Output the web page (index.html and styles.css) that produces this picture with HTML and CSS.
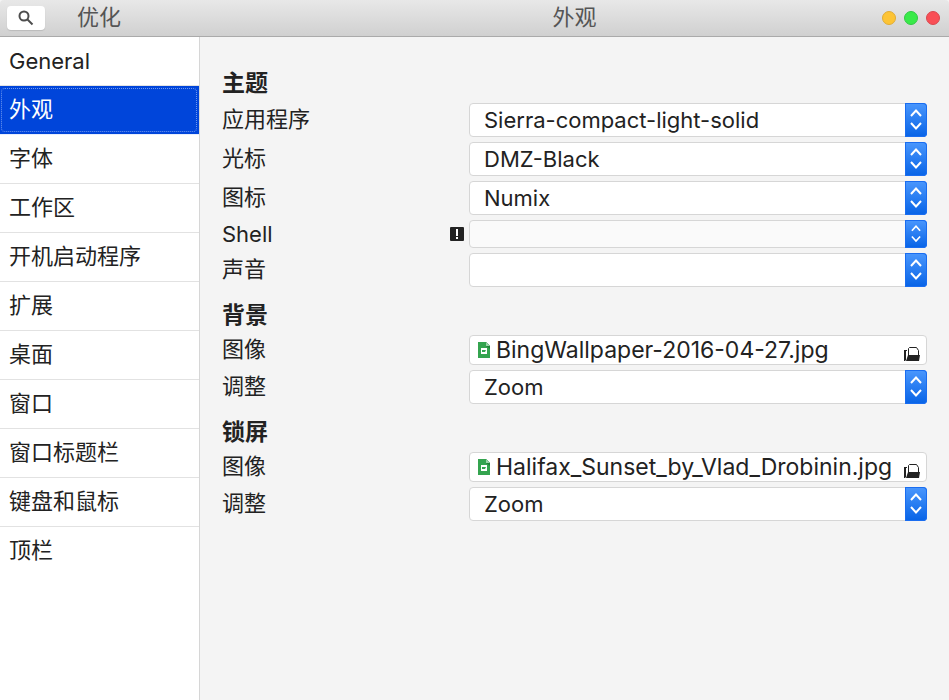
FILE: index.html
```
<!DOCTYPE html>
<html lang="zh-CN">
<head>
<meta charset="utf-8">
<meta name="viewport" content="width=device-width, initial-scale=1">
<title>优化</title>
<link rel="stylesheet" href="styles.css">
</head>
<body>
<svg class="sprites" aria-hidden="true">
  <symbol id="updown" viewBox="0 0 22 34"><path d="M6 13 11 7.500l5 5.500M6 20 11 25.500l5-5.500" fill="none" stroke="#fff" stroke-width="2"/></symbol>
  <symbol id="image-file" viewBox="0 0 12 16"><path d="M0 0h8l4 4v12H0z" fill="#34a44f"/><path d="M8 0l4 4v3L8 4z" fill="#23803a"/><path d="M8 0l4 4H8z" fill="#9bd3a8"/><path d="M3 6h6v6H3z" fill="#fff"/><path d="M4 8h4l-1 2H4z" fill="#34a44f"/></symbol>
  <symbol id="folder-open" viewBox="0 0 16 14"><path d="M0 3h3v1H2v9l-1 1H0z" fill="#222"/><path d="M4.500 8V1.500l1-1h7l2 3V8" fill="none" stroke="#222"/><path d="M4 8h12l-1 6H2z" fill="#222"/></symbol>
</svg>
<header class="titlebar">
  <div class="titlebar-side">
    <button class="search" type="button" aria-label="搜索"><svg viewBox="0 0 16 16" width="16" height="16"><circle cx="6" cy="6" r="4.500"/><path d="M9.500 9.500l5 5"/></svg></button>
    <h1>优化</h1>
  </div>
  <div class="titlebar-main">
    <h2>外观</h2>
    <div class="window-buttons">
      <button class="dot minimize" type="button" aria-label="最小化"></button>
      <button class="dot maximize" type="button" aria-label="最大化"></button>
      <button class="dot close" type="button" aria-label="关闭"></button>
    </div>
  </div>
</header>
<div class="content">
  <nav class="sidebar">
    <a href="#" class="latin">General</a>
    <a href="#" class="selected" aria-current="page">外观</a>
    <a href="#">字体</a>
    <a href="#">工作区</a>
    <a href="#">开机启动程序</a>
    <a href="#">扩展</a>
    <a href="#">桌面</a>
    <a href="#">窗口</a>
    <a href="#">窗口标题栏</a>
    <a href="#">键盘和鼠标</a>
    <a href="#">顶栏</a>
  </nav>
  <main class="panel">
    <h3>主题</h3>
    <div class="row"><label for="app">应用程序</label><div class="combo"><select id="app"><option>Sierra-compact-light-solid</option></select><svg class="stepper"><use href="#updown"/></svg></div></div>
    <div class="row"><label for="cursor">光标</label><div class="combo"><select id="cursor"><option>DMZ-Black</option></select><svg class="stepper"><use href="#updown"/></svg></div></div>
    <div class="row"><label for="icons">图标</label><div class="combo"><select id="icons"><option>Numix</option></select><svg class="stepper"><use href="#updown"/></svg></div></div>
    <div class="row"><label for="shell" class="latin">Shell<svg viewBox="0 0 14 14" width="14" height="14"><rect width="14" height="14" rx="1" fill="#222"/><path d="M6 2h2v7H6zM6 10h2v2H6z" fill="#fff"/></svg></label><div class="combo short"><select id="shell" disabled><option></option></select><svg class="stepper"><use href="#updown"/></svg></div></div>
    <div class="row"><label for="sound">声音</label><div class="combo"><select id="sound"><option></option></select><svg class="stepper"><use href="#updown"/></svg></div></div>
    <h3>背景</h3>
    <div class="row"><label for="bg">图像</label><button id="bg" class="file" type="button"><svg width="12" height="16"><use href="#image-file"/></svg><span>BingWallpaper-2016-04-27.jpg</span><svg class="folder" width="16" height="14"><use href="#folder-open"/></svg></button></div>
    <div class="row"><label for="bg-mode">调整</label><div class="combo"><select id="bg-mode"><option>Zoom</option></select><svg class="stepper"><use href="#updown"/></svg></div></div>
    <h3>锁屏</h3>
    <div class="row"><label for="lock">图像</label><button id="lock" class="file" type="button"><svg width="12" height="16"><use href="#image-file"/></svg><span>Halifax_Sunset_by_Vlad_Drobinin.jpg</span><svg class="folder" width="16" height="14"><use href="#folder-open"/></svg></button></div>
    <div class="row"><label for="lock-mode">调整</label><div class="combo"><select id="lock-mode"><option>Zoom</option></select><svg class="stepper"><use href="#updown"/></svg></div></div>
  </main>
</div>
</body>
</html>
```
FILE: styles.css
```
* { box-sizing: border-box; }
body {
  margin: 0;
  min-height: 100vh;
  display: flex;
  flex-direction: column;
  background: #f4f4f4;
  color: #222;
  font: 22px/30px Inter, "Noto Sans CJK SC", sans-serif;
}
h1, h2, h3 { margin: 0; font-size: 22px; line-height: 30px; }
button, select { font: inherit; color: inherit; }
.sprites { display: none; }

.titlebar {
  display: flex;
  height: 37px;
  background: linear-gradient(#e8e8e8, #d0d0d0);
  border-bottom: 1px solid #aaa;
  border-radius: 4px 4px 0 0;
  color: #555;
}
.titlebar h1, .titlebar h2 { font-weight: 400; padding-bottom: 2px; }
.titlebar-side {
  width: 200px;
  display: flex;
  align-items: center;
  gap: 32px;
  padding-left: 7px;
}
.search {
  display: flex;
  align-items: center;
  justify-content: center;
  width: 38px;
  height: 24px;
  padding: 0;
  border: 0;
  border-radius: 4px;
  background: #fff;
  box-shadow: 0 1px 1px #bbb;
}
.search svg { fill: none; stroke: #4d4d4d; stroke-width: 2; }
.titlebar-main {
  flex: 1;
  display: grid;
  grid-template-columns: 1fr auto 1fr;
  align-items: center;
}
.titlebar-main h2 { grid-column: 2; }
.window-buttons {
  display: flex;
  justify-content: flex-end;
  gap: 8px;
  padding-right: 9px;
}
.dot { width: 14px; height: 14px; padding: 0; border: 1px solid; border-radius: 50%; }
.minimize { background: #fdc435; border-color: #e0ac35; }
.maximize { background: #39ea49; border-color: #33c845; }
.close { background: #f94f56; border-color: #d9484f; }

.content { flex: 1; display: flex; }
.sidebar { width: 200px; background: #fff; border-right: 1px solid #d6d6d6; }
.sidebar a {
  position: relative;
  display: flex;
  align-items: center;
  height: 49px;
  padding: 0 0 2px 9px;
  border-bottom: 1px solid #e2e2e2;
  color: inherit;
  text-decoration: none;
}
.sidebar a:last-child { border-color: transparent; }
.sidebar .selected {
  background: #0045da;
  border-color: #e8eefb;
  color: #fff;
}
.sidebar .selected::after {
  content: "";
  position: absolute;
  inset: 2px 2px 2px 1px;
  border: 1px dotted #6f98ee;
  border-radius: 4px;
}

.panel {
  flex: 1;
  min-width: 0;
  display: flex;
  flex-direction: column;
  gap: 5px;
  padding: 23px 22px;
}
.panel h3 { margin-top: 8px; font-size: 23px; font-weight: 700; }
.row { display: grid; grid-template-columns: 247px minmax(0, 1fr); align-items: center; }
.row label {
  display: flex;
  align-items: center;
  justify-content: space-between;
  height: 28px;
  padding: 0 5px 2px 0;
}
.sidebar .latin, .row .latin { padding-bottom: 0; }
.combo { position: relative; height: 34px; }
.combo.short { height: 28px; }
.combo select {
  display: block;
  appearance: none;
  width: 100%;
  height: 100%;
  padding: 0 30px 0 14px;
  border: 1px solid #d6d6d6;
  border-radius: 4px;
  background: #fff;
}
.combo select:disabled { background: #fafafa; opacity: 1; }
.stepper {
  position: absolute;
  top: 0;
  right: 0;
  width: 22px;
  height: 100%;
  border-radius: 0 4px 4px 0;
  background: linear-gradient(#4a97fd, #0763e6);
  box-shadow: inset 0 0 0 1px #1a6df0;
  pointer-events: none;
}
.file {
  display: flex;
  align-items: center;
  gap: 6px;
  width: 100%;
  height: 30px;
  padding: 0 6px 0 8px;
  border: 1px solid #d6d6d6;
  border-radius: 4px;
  background: #fff;
  font-size: 23px;
  text-align: left;
}
.file span { flex: 1; min-width: 0; white-space: nowrap; }
.folder { flex: none; align-self: flex-end; margin-bottom: 3px; }
```
